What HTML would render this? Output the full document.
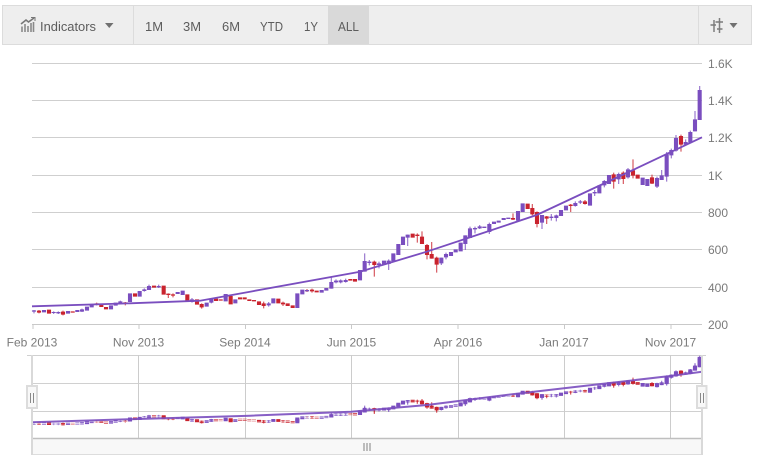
<!DOCTYPE html>
<html><head><meta charset="utf-8"><title>Chart</title>
<style>
html,body{margin:0;padding:0;background:#fff;width:760px;height:460px;overflow:hidden}
svg{display:block;font-family:"Liberation Sans",sans-serif}
.t{font-size:13px;fill:#5c5c5c}
.l{font-size:12px;fill:#7a7a7a}
.pb{fill:none;stroke:#7a4ebf;stroke-width:4.1;vector-effect:non-scaling-stroke}
.rb{fill:none;stroke:#c9232e;stroke-width:4.1;vector-effect:non-scaling-stroke}
.pw{fill:none;stroke:#7a4ebf;stroke-width:1.2;stroke-opacity:.75;vector-effect:non-scaling-stroke}
.rw{fill:none;stroke:#c9232e;stroke-width:1.2;stroke-opacity:.75;vector-effect:non-scaling-stroke}
</style></head><body>
<svg width="760" height="460" viewBox="0 0 760 460" xmlns="http://www.w3.org/2000/svg">
<defs>
<g id="s">
<g transform="translate(0,270) scale(.33333)">
<path class="pw" d="M102 120V130M161 124V132M175 124V132M246 116V126M361 92V102M433 55V65M447 44V60M476 44V54M576 84V98M634 84V100"/>
<path class="rw" d="M117 120V130M189 122V136M376 96V106M505 70V84M519 70V82M605 100V116M290 98V106"/>
<path class="pb" d="M102 121V125M132 120V127M161 126V129M175 126V130M204 123V131M232 120V126M246 118V125M261 110V122M275 102V112M333 106V118M347 98V107M361 94V100M390 70V96M419 63V80M433 58V63M447 48V60M476 48V52M533 66V72M548 62V75M576 88V96M620 98V110M634 86V98M677 72V94M706 88V100"/>
<path class="rb" d="M117 122V128M147 119V131M189 125V134M218 124V128M290 100V104M304 104V111M318 111V118M376 97V101M405 70V80M462 47V53M491 47V74M505 71V75M519 73V77M562 73V92M591 88V104M605 102V112M648 86V93M662 88V92M692 78V103M720 82V88M734 82V88M748 88V93"/>
</g>
<g transform="translate(250,220) scale(.33333)">
<path class="pw" d="M56 246V260M244 172V206M258 178V190M272 178V190M287 176V188M344 100V155M358 120V136M387 125V145M416 118V150M473 44V78M574 113V135M588 98V118M646 46V90M660 20V54M675 20V40M689 15V27M718 8V42"/>
<path class="rw" d="M41 245V265M99 245V258M171 207V216M186 206V218M373 122V170M502 40V68M516 34V72M531 72V118M545 66V116M560 110V158"/>
<path class="pb" d="M56 250V256M70 235V250M142 220V264M157 209V223M171 210V214M215 210V218M229 204V212M244 186V206M258 182V187M272 181V187M287 180V186M330 150V181M344 123V155M358 125V129M387 130V135M402 122V135M416 122V132M430 100V124M445 72V105M459 50V75M473 44V53M574 113V130M588 102V112M603 96V108M617 88V97M632 68V94M646 46V72M660 25V54M675 24V28M689 19V25M703 20V24M718 12V36M732 5V12M746 2V8"/>
<path class="rb" d="M12 240V244M27 244V255M41 250V258M85 236V250M99 248V253M113 250V258M128 256V264M186 209V214M200 212V217M301 177V182M315 177V185M373 125V135M488 41V53M502 44V48M516 50V72M531 75V105M545 102V116M560 113V134"/>
</g>
<g transform="translate(480,130) scale(.33333)">
<path class="pw" d="M114 243V272M186 255V297M214 252V272M229 254V274M286 214V230M301 210V222M344 180V198M373 150V172M416 128V162M444 114V146M531 140V174M545 120V150M560 66V155M574 56V85M588 15V65M617 28V46M631 2V40"/>
<path class="rw" d="M99 250V270M157 222V256M171 244V292M200 258V282M272 222V246M315 210V224M401 128V176M430 124V162M459 88V145M516 134V162M603 14V65"/>
<path class="pb" d="M71 264V270M85 263V267M114 243V272M128 220V246M186 255V278M214 260V264M229 256V264M243 240V258M258 227V241M286 219V228M301 214V218M330 190V227M344 186V190M358 166V190M373 153V166M387 135V162M416 132V148M444 118V142M488 143V165M502 147V168M531 144V170M545 136V150M560 72V140M574 60V76M588 24V62M617 36V44M631 6V38"/>
<path class="rb" d="M99 264V269M143 221V237M157 234V253M171 246V282M200 259V266M272 224V228M315 214V222M401 133V155M430 128V147M459 121V137M473 134V146M516 142V161M603 18V44"/>
</g>
<g transform="translate(600,0) scale(.33333)">
<path class="pw" d="M285 333V394M299 258V360"/>
<path class="pb" d="M285 358V394M299 270V360"/>
</g>
</g>
</defs>

<!-- toolbar -->
<rect x="2.5" y="5.5" width="749" height="39" fill="#eeeeee" stroke="#dcdcdc"/>
<rect x="328" y="6" width="41" height="38" fill="#d9d9d9"/>
<path d="M133.5 6V44M698.5 6V44" stroke="#dcdcdc" fill="none"/>
<path d="M22 26.500V32M25 24V32M28 26V32M31 23V32M33.500 22V32" stroke="#8a8a8a" stroke-width="1.600" fill="none"/>
<path d="M21 24L26 20L28.500 22L34 18" stroke="#777" stroke-width="1.600" fill="none"/>
<path d="M31 17.500H35V21" stroke="#777" stroke-width="1" fill="none"/>
<path d="M105 23H113.500L109.250 28Z" fill="#707070"/>
<g lengthAdjust="spacingAndGlyphs">
<text x="40" y="31" class="t" textLength="56" lengthAdjust="spacingAndGlyphs">Indicators</text>
<text x="145" y="31" class="t" textLength="18" lengthAdjust="spacingAndGlyphs">1M</text>
<text x="183" y="31" class="t" textLength="18" lengthAdjust="spacingAndGlyphs">3M</text>
<text x="222" y="31" class="t" textLength="18" lengthAdjust="spacingAndGlyphs">6M</text>
<text x="260" y="31" class="t" textLength="23" lengthAdjust="spacingAndGlyphs">YTD</text>
<text x="304" y="31" class="t" textLength="14" lengthAdjust="spacingAndGlyphs">1Y</text>
<text x="338" y="31" class="t" textLength="21" lengthAdjust="spacingAndGlyphs">ALL</text>
</g>
<path d="M714 20V32M719.500 18V33" stroke="#7f7f7f" stroke-width="1.500" fill="none"/>
<path d="M710.500 25H716M715.500 22H717.500M717 29H722.500M717 22H723" stroke="#7a7a7a" stroke-width="1.500" fill="none"/>
<path d="M729.500 23H737.500L733.500 28Z" fill="#707070"/>

<!-- main grid -->
<path d="M32 63.500H702M32 100.500H702M32 137.500H702M32 175.500H702M32 212.500H702M32 249.500H702M32 287.500H702" stroke="#cfcfcf" fill="none"/>
<path d="M32 324.500H702M33 324V329M139 324V329M245.500 324V329M351.500 324V329M458 324V329M564.500 324V329M671 324V329" stroke="#c9c9c9" fill="none"/>

<!-- main series -->
<use href="#s"/>
<path d="M32 306.300L130 303.300L200 300.700L250 291.700L360 271.700L426.700 251.700L480 234L536.700 215L590 190L633 170L702 137.300" fill="none" stroke="#7a4ebf" stroke-width="1.800"/>

<!-- labels -->
<text x="708" y="68" class="l">1.6K</text>
<text x="708" y="105" class="l">1.4K</text>
<text x="708" y="142" class="l">1.2K</text>
<text x="708" y="180" class="l">1K</text>
<text x="708" y="217" class="l">800</text>
<text x="708" y="254" class="l">600</text>
<text x="708" y="292" class="l">400</text>
<text x="708" y="329" class="l">200</text>
<g text-anchor="middle">
<text x="32" y="346.500" class="l">Feb 2013</text>
<text x="138.500" y="346.500" class="l">Nov 2013</text>
<text x="245" y="346.500" class="l">Sep 2014</text>
<text x="351.500" y="346.500" class="l">Jun 2015</text>
<text x="458" y="346.500" class="l">Apr 2016</text>
<text x="564" y="346.500" class="l">Jan 2017</text>
<text x="670.500" y="346.500" class="l">Nov 2017</text>
</g>

<!-- navigator grid -->
<path d="M27 355.500H706M32 383.500H702M32 411.500H702" stroke="#d0d0d0" fill="none"/>
<path d="M138.500 355V438M245.500 355V438M351.500 355V438M458.500 355V438M564.500 355V438M670.500 355V438" stroke="#cccccc" fill="none"/>
<!-- navigator series -->
<use href="#s" transform="translate(0,330.100) scale(1,.298)"/>
<use href="#s" transform="translate(0,331.500) scale(1,.298)"/>
<path d="M32 422.200L138 419L250 415.700L351 411.700L427 405L500 395.700L564 388.300L670 376L702 371.700" fill="none" stroke="#7a4ebf" stroke-width="2" opacity=".9"/>
<!-- scrollbar -->
<rect x="32" y="439" width="670" height="15" fill="#f8f8f8"/>
<path d="M32 438.500H702" stroke="#bfbfbf" stroke-width="1.500" fill="none"/>
<path d="M32 454.500H702" stroke="#dddddd" fill="none"/>
<path d="M32 355V455M702 355V455" stroke="#d9d9d9" stroke-width="2" fill="none"/>
<path d="M364 443V451M367 443V451M370 443V451" stroke="#bdbdbd" stroke-width="2" fill="none"/>
<!-- handles -->
<rect x="27" y="386" width="10" height="22" fill="#f8f8f8" stroke="#dcdcdc" stroke-width="2"/>
<path d="M30.500 393V403M33.500 393V403" stroke="#8a8a8a" fill="none"/>
<rect x="697" y="386" width="9.500" height="22" fill="#f8f8f8" stroke="#dcdcdc" stroke-width="2"/>
<path d="M700.500 393V403M703.500 393V403" stroke="#8a8a8a" fill="none"/>
</svg>
</body></html>
